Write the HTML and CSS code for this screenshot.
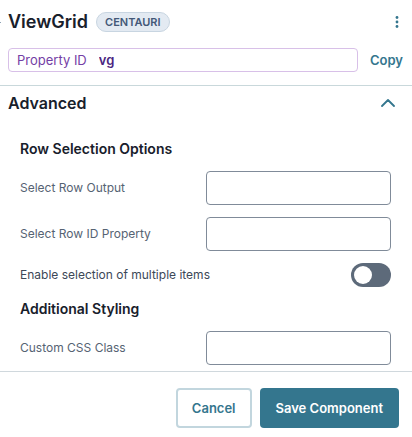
FILE: index.html
```html
<!DOCTYPE html>
<html lang="en">
<head>
  <meta charset="UTF-8" />
  <meta name="viewport" content="width=device-width, initial-scale=1.0"/>
  <title>ViewGrid</title>
  <link rel="stylesheet" href="styles.css">
</head>
<body>

<form class="panel">
  <!-- Component name and id -->
  <header class="panel-header">
    <div class="title-row">
      <h1>ViewGrid</h1>
      <span class="badge">CENTAURI</span>
      <button type="button" class="icon-btn menu-btn" aria-label="More options">
        <svg width="4" height="12" viewBox="0 0 4 12" fill="currentColor">
          <circle cx="2" cy="1.5" r="1.4"/>
          <circle cx="2" cy="6" r="1.4"/>
          <circle cx="2" cy="10.5" r="1.4"/>
        </svg>
      </button>
    </div>
    <div class="id-row">
      <div class="property-id">
        <label for="propertyId">Property ID</label>
        <input type="text" id="propertyId" value="vg" />
      </div>
      <button type="button" class="copy-btn">Copy</button>
    </div>
  </header>

  <!-- Advanced settings -->
  <section class="advanced">
    <div class="section-title">
      <h2>Advanced</h2>
      <button type="button" class="icon-btn" aria-label="Collapse section">
        <svg width="14" height="8" viewBox="0 0 14 8" fill="none" stroke="currentColor" stroke-width="1.8" stroke-linecap="round" stroke-linejoin="round">
          <path d="M1 7l6-6 6 6"/>
        </svg>
      </button>
    </div>

    <div class="options">
      <h3>Row Selection Options</h3>
      <div class="field">
        <label for="rowOutput">Select Row Output</label>
        <input type="text" id="rowOutput" />
      </div>
      <div class="field">
        <label for="rowId">Select Row ID Property</label>
        <input type="text" id="rowId" />
      </div>
      <div class="toggle-row">
        <label for="multiple">Enable selection of multiple items</label>
        <input type="checkbox" class="toggle" id="multiple" />
      </div>

      <h3>Additional Styling</h3>
      <div class="field">
        <label for="cssClass">Custom CSS Class</label>
        <input type="text" id="cssClass" />
      </div>
    </div>
  </section>

  <footer class="actions">
    <button type="button" class="btn btn-cancel">Cancel</button>
    <button type="submit" class="btn btn-save">Save Component</button>
  </footer>
</form>

</body>
</html>
```

FILE: styles.css
```css
* {
  box-sizing: border-box;
}
body {
  font-family: Inter, "Liberation Sans", sans-serif;
  font-size: 13px;
  line-height: 20px;
  background: #fff;
  color: #18202b;
  margin: 0;
}
h1, h2, h3 {
  margin: 0;
  font-weight: 600;
}
button, input {
  font-family: inherit;
  font-size: inherit;
  line-height: inherit;
}
button {
  padding: 0;
  border: none;
  background: none;
  font-weight: 600;
  color: #34768e;
  cursor: pointer;
}

.panel-header {
  padding: 10px 9px 13px 8px;
  border-bottom: 1px solid #c9d8db;
}
.title-row {
  position: relative;
  display: flex;
  align-items: center;
  gap: 8px;
  height: 24px;
}
.title-row::before {
  content: "";
  position: absolute;
  left: -8px;
  width: 1px;
  height: 1px;
  background: #8fa3b5;
}
h1 {
  font-size: 18px;
}
.badge {
  padding: 0 8px;
  border: 1px solid #c8d5e1;
  border-radius: 10px;
  background: #e3eaf2;
  color: #435878;
  font-size: 11px;
  font-weight: 600;
  line-height: 18px;
}
.icon-btn {
  display: flex;
  justify-content: center;
  align-items: center;
  width: 24px;
  height: 24px;
}
.menu-btn {
  width: 12px;
  margin-left: auto;
}

.id-row {
  display: flex;
  align-items: center;
  gap: 12px;
  margin-top: 14px;
}
.property-id {
  flex: 1;
  display: flex;
  align-items: center;
  gap: 12px;
  height: 24px;
  padding: 0 8px;
  border: 1px solid #d8c0e8;
  border-radius: 4px;
  color: #7440a5;
}
.property-id input {
  flex: 1;
  min-width: 0;
  padding: 0;
  border: none;
  background: none;
  color: #4b2580;
  font-weight: 600;
}

.section-title {
  display: flex;
  align-items: center;
  justify-content: space-between;
  padding: 5px 12px 0 8px;
}
h2 {
  font-size: 16px;
}

.options {
  display: flex;
  flex-direction: column;
  gap: 12px;
  padding: 24px 21px 6px 20px;
}
h3 {
  font-size: 14px;
}
.field {
  display: grid;
  grid-template-columns: 1fr 1fr;
  align-items: center;
}
.field label {
  color: #566373;
  font-size: 12px;
}
.field input {
  width: 100%;
  height: 34px;
  padding: 0 8px;
  border: 1px solid #808b99;
  border-radius: 4px;
  background: #fff;
}
.toggle-row {
  display: flex;
  align-items: center;
  justify-content: space-between;
  color: #3c4857;
  font-size: 12px;
}
.toggle {
  appearance: none;
  display: flex;
  align-items: center;
  width: 40px;
  height: 24px;
  margin: 0;
  padding: 0 3px;
  border-radius: 12px;
  background: #5d6a7a;
  cursor: pointer;
}
.toggle::before {
  content: "";
  width: 18px;
  height: 18px;
  border-radius: 50%;
  background: #fff;
}
.toggle:checked {
  justify-content: flex-end;
  background: #34768e;
}

.actions {
  display: flex;
  justify-content: flex-end;
  gap: 8px;
  padding: 16px 13px 9px;
  border-top: 1px solid #d0d8dd;
}
.btn {
  height: 40px;
  padding: 0 16px;
  border-radius: 4px;
}
.btn-cancel {
  padding: 0 14px;
  border: 2px solid #c2d6de;
}
.btn-save {
  background: #34768e;
  color: #fff;
}
```
